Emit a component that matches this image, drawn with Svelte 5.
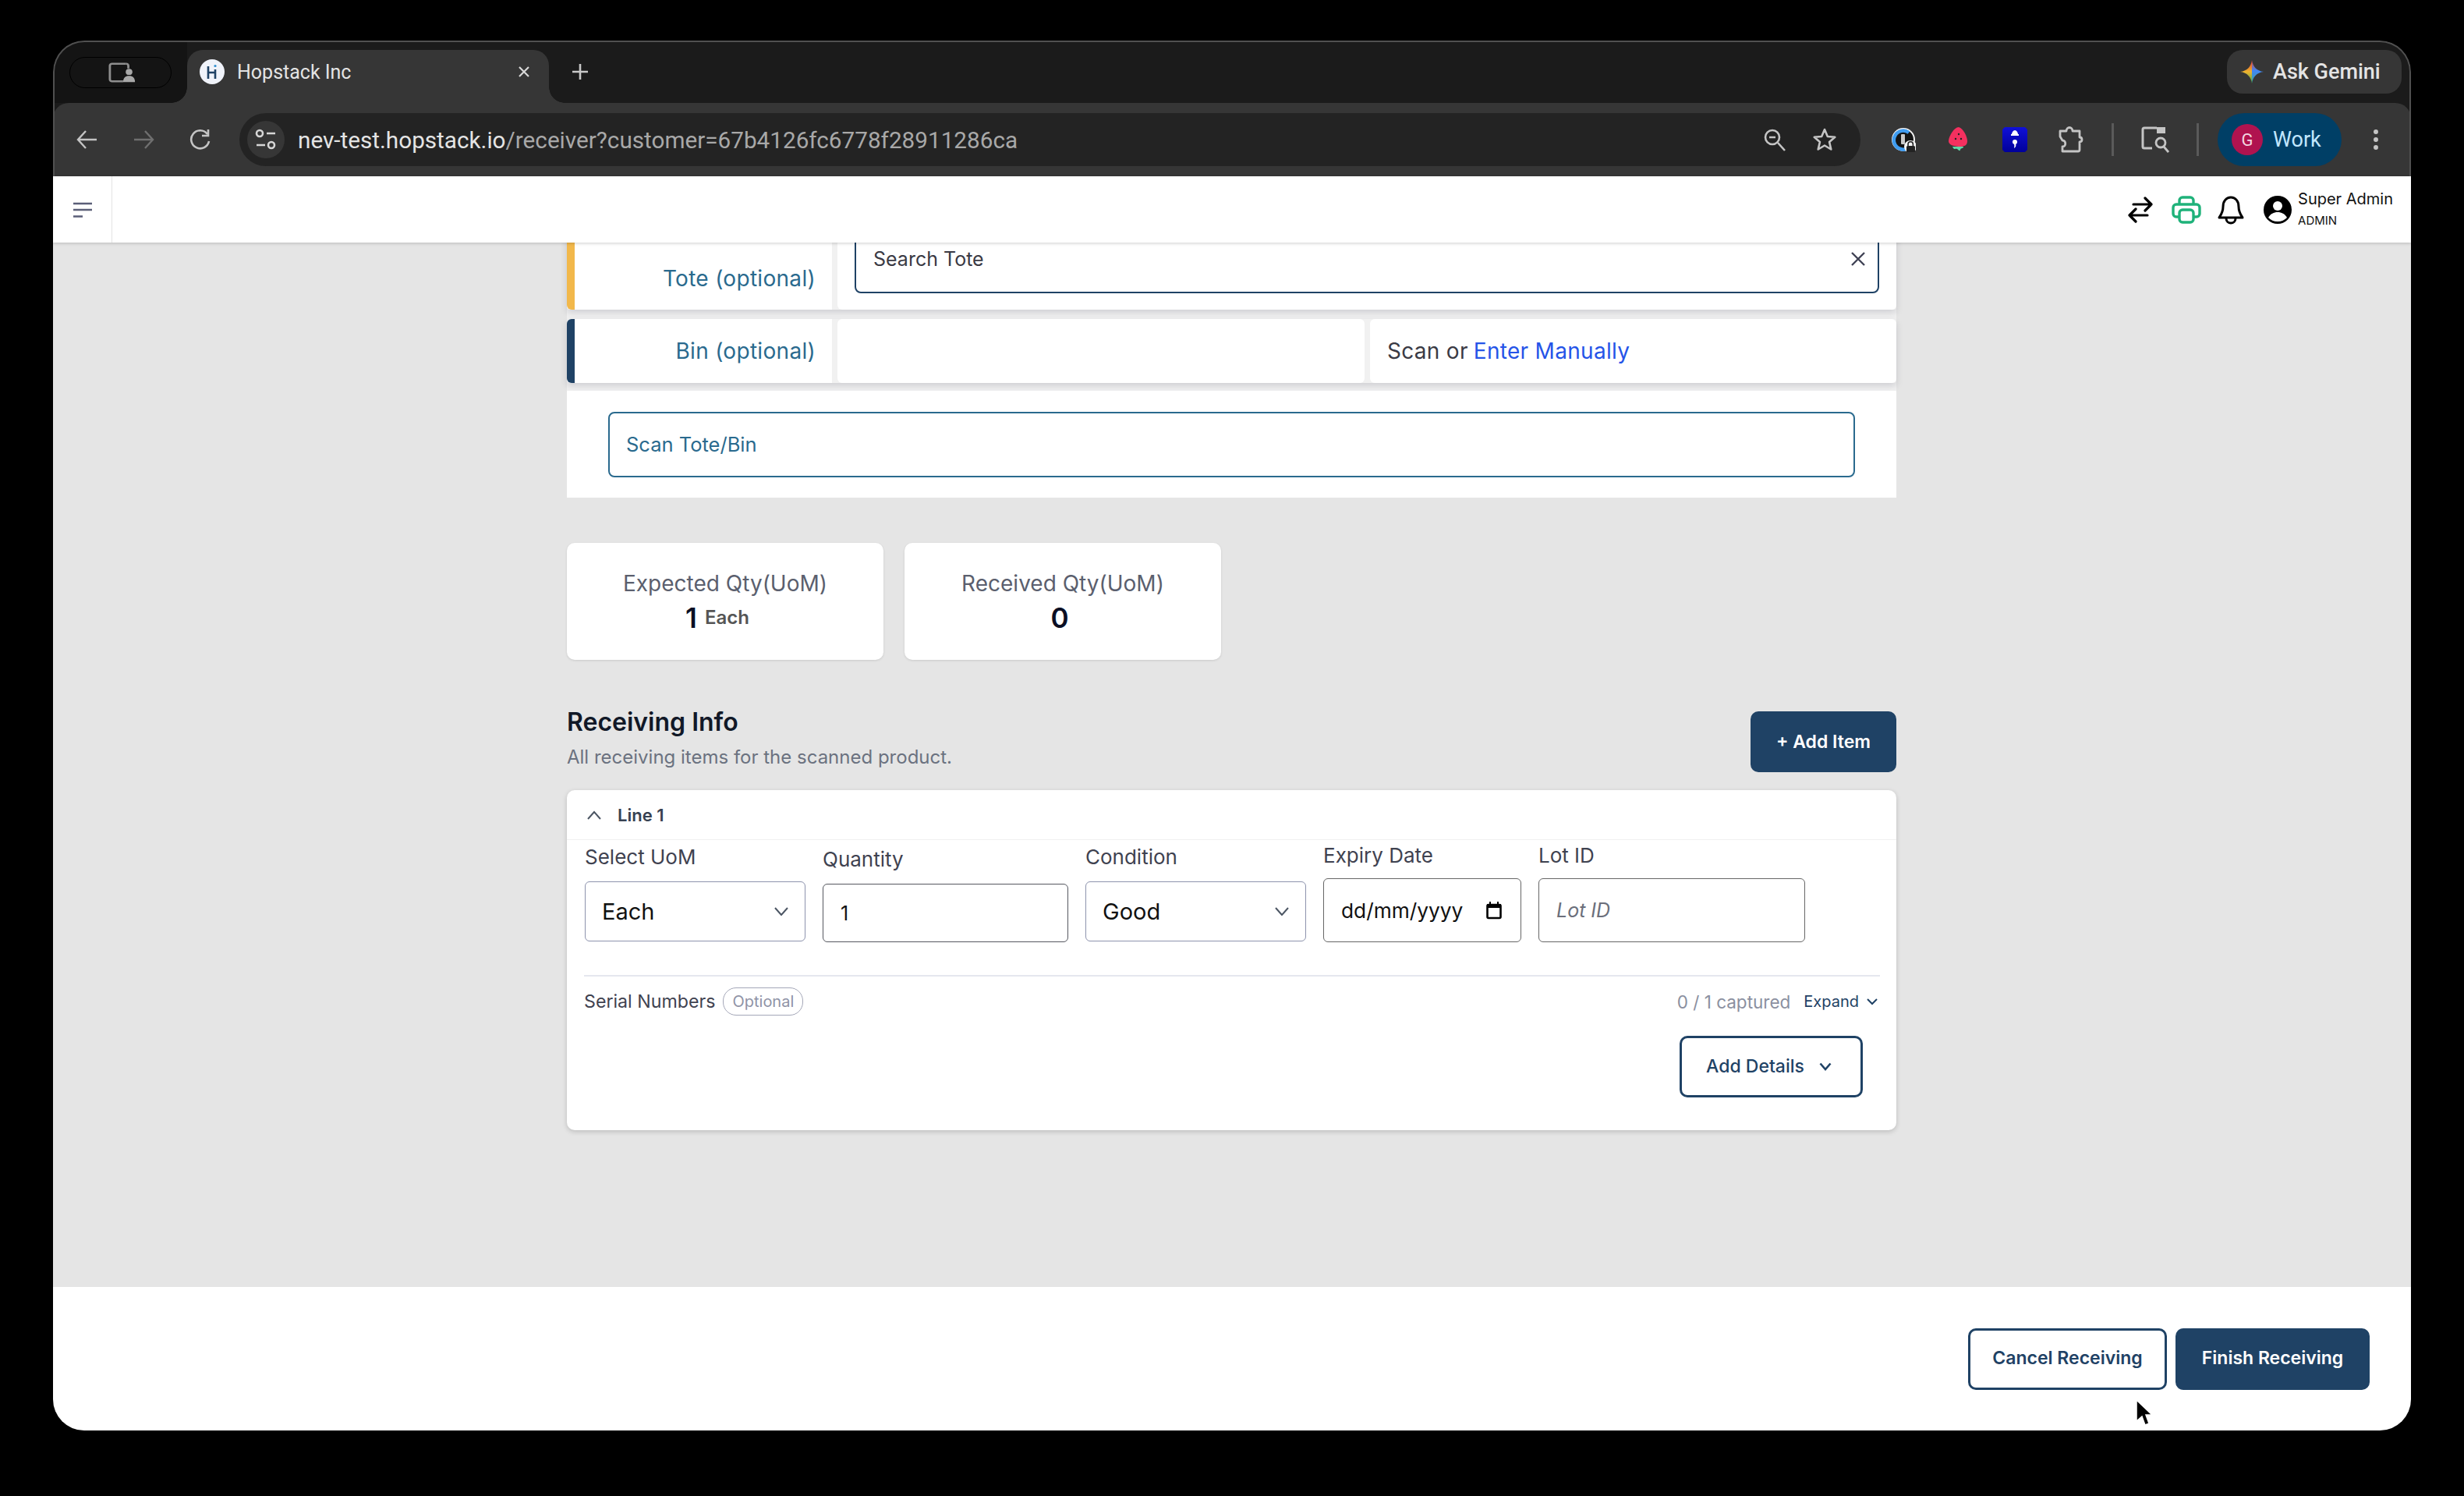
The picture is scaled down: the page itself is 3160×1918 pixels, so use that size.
<script>
	const url_host = "nev-test.hopstack.io";
	const url_rest = "/receiver?customer=67b4126fc6778f28911286ca";

	const qty_cards = [
		{ label: "Expected Qty(UoM)", value: "1", unit: "Each" },
		{ label: "Received Qty(UoM)", value: "0", unit: "" }
	];
</script>

<div class="window">
	<div class="tabstrip">
		<div class="profile-slot">
			<div class="profile-pill">
				<svg width="36" height="26" viewBox="0 0 38 30" preserveAspectRatio="none" fill="none">
					<path d="M24 2H5a3 3 0 0 0-3 3v20a3 3 0 0 0 3 3h15" stroke="#8e8e8e" stroke-width="3"/>
					<path d="M24 2a3 3 0 0 1 3 3v4" stroke="#8e8e8e" stroke-width="3"/>
					<circle cx="28" cy="14" r="4.500" fill="#a8a8a8"/>
					<path d="M20 29c0-6 3-9 8-9s8 3 8 9z" fill="#a8a8a8"/>
				</svg>
			</div>
		</div>
		<div class="tab">
			<div class="favicon">
				<svg width="16" height="22" viewBox="0 0 16 22">
					<path d="M3 4v16M12 8v12M3 12h9" stroke="#1f4265" stroke-width="2.600" fill="none"/>
					<circle cx="12" cy="3.500" r="1.600" fill="#2f8fd0"/>
				</svg>
			</div>
			<span class="tab-title">Hopstack Inc</span>
			<svg class="tab-close" width="18" height="18" viewBox="0 0 18 18">
				<path d="M3 3l12 12M15 3L3 15" stroke="#d8d8d8" stroke-width="2.200"/>
			</svg>
		</div>
		<svg class="new-tab" width="24" height="24" viewBox="0 0 24 24">
			<path d="M12 2v20M2 12h20" stroke="#c8c8c8" stroke-width="2.600"/>
		</svg>
		<div class="spacer"></div>
		<div class="gemini">
			<svg width="30" height="30" viewBox="0 0 30 30">
				<defs>
					<linearGradient id="gem-left" x1="0" y1="0" x2="0" y2="1">
						<stop offset="0" stop-color="#e0392f"/>
						<stop offset="0.5" stop-color="#eeb32e"/>
						<stop offset="1" stop-color="#35a853"/>
					</linearGradient>
					<linearGradient id="gem-right" x1="0" y1="0" x2="0" y2="1">
						<stop offset="0" stop-color="#d9473f"/>
						<stop offset="0.45" stop-color="#4285f4"/>
						<stop offset="1" stop-color="#3aa6a0"/>
					</linearGradient>
				</defs>
				<path d="M15 0C14 8 9 14 0 15c9 1 14 7 15 15z" fill="url(#gem-left)"/>
				<path d="M15 0c1 8 6 14 15 15-9 1-14 7-15 15z" fill="url(#gem-right)"/>
			</svg>
			<span>Ask Gemini</span>
		</div>
	</div>

	<div class="toolbar">
		<div class="nav-btns">
			<svg width="32" height="32" viewBox="0 0 32 32" fill="none" stroke="#c4c4c4" stroke-width="2.400">
				<path d="M28 16H5M14 5L4 16l10 11"/>
			</svg>
			<svg width="32" height="32" viewBox="0 0 32 32" fill="none" stroke="#6f6f6f" stroke-width="2.400">
				<path d="M4 16h23M18 5l10 11-10 11"/>
			</svg>
			<svg width="32" height="32" viewBox="0 0 32 32" fill="none" stroke="#c4c4c4" stroke-width="2.600">
				<path d="M26 9a11.500 11.500 0 1 0 2 9"/>
				<path d="M27 3v8h-8"/>
			</svg>
		</div>
		<div class="omnibox">
			<div class="tune">
				<svg width="28" height="30" viewBox="0 0 28 30" fill="none" stroke="#d6d6d6" stroke-width="2.600">
					<circle cx="6" cy="7" r="4"/>
					<path d="M15 7h11M2 22h11"/>
					<circle cx="21" cy="22" r="4"/>
				</svg>
			</div>
			<div class="url"><span class="url-host">{url_host}</span><span class="url-rest">{url_rest}</span></div>
			<svg class="omni-icon" width="32" height="32" viewBox="0 0 32 32" fill="none" stroke="#c4c4c4" stroke-width="2.600">
				<circle cx="13" cy="13" r="9"/>
				<path d="M9 13h8M20 20l9 10"/>
			</svg>
			<svg class="omni-icon star" width="32" height="32" viewBox="0 0 32 32" fill="none" stroke="#c4c4c4" stroke-width="2.600">
				<path d="M16 3l3.800 9 9.500.8-7.200 6.300 2.200 9.400L16 23.500l-8.300 5 2.200-9.400-7.200-6.300 9.500-.8z" stroke-linejoin="round"/>
			</svg>
		</div>
		<div class="extensions">
			<svg width="32" height="32" viewBox="0 0 32 32">
				<circle cx="16" cy="16" r="15" fill="#f4f4f4"/>
				<circle cx="16" cy="16" r="13" fill="#141414"/>
				<path d="M23 7a12 12 0 1 0 4 14" fill="none" stroke="#3f9cf0" stroke-width="4.500"/>
				<rect x="13" y="9" width="5" height="13" rx="1" fill="#c9c9c9"/>
				<circle cx="25" cy="25" r="8" fill="#f4f4f4"/>
				<rect x="20" y="24" width="11" height="9" rx="1.500" fill="#222"/>
				<path d="M22 24v-2a3.200 3.200 0 0 1 6.400 0v2" fill="none" stroke="#222" stroke-width="1.600"/>
			</svg>
			<svg class="straw" width="26" height="34" viewBox="0 0 26 34">
				<path d="M14 1c6 2 11 12 11 18 0 5-4 7-9 7-7 0-15-2-15-7C1 13 8 1 14 1z" fill="#f4305f"/>
				<path d="M6 26c2 5 4 2 6 3 2 1 3 4 4 1 1-3 4-1 4-4z" fill="#5fd8a8"/>
				<circle cx="14" cy="10" r="1.200" fill="#222"/>
				<circle cx="10" cy="16" r="1.200" fill="#222"/>
				<circle cx="17" cy="16" r="1.200" fill="#222"/>
			</svg>
			<svg width="32" height="32" viewBox="0 0 32 32">
				<defs>
					<linearGradient id="semi" x1="0" y1="0" x2="0" y2="1">
						<stop offset="0" stop-color="#1010d8"/>
						<stop offset="1" stop-color="#00009a"/>
					</linearGradient>
				</defs>
				<path d="M3 0h26l3 3v26l-3 3H3l-3-3V3z" fill="url(#semi)"/>
				<path d="M12 9c0-2 2-5 4-5s4 3 4 5z" fill="#fff"/>
				<rect x="11" y="9" width="10" height="2" fill="#fff"/>
				<circle cx="16" cy="19" r="3" fill="#fff"/>
				<path d="M17 21c1 3 0 5-2 6 .5-2 .5-4 0-6z" fill="#fff"/>
			</svg>
			<svg class="puzzle" width="34" height="34" viewBox="0 0 34 34" fill="none" stroke="#c4c4c4" stroke-width="2.800" stroke-linejoin="round">
				<path d="M3 6h8c0-6 8-6 8 0h9v8c4 0 4 6 0 6v10a2 2 0 0 1-2 2H6v-6c5 0 5-8 0-8l-3-5z"/>
			</svg>
			<div class="ext-sep"></div>
			<svg width="36" height="34" viewBox="0 0 36 34" fill="none">
				<path d="M20 2H4a2 2 0 0 0-2 2v22a2 2 0 0 0 2 2h10" stroke="#c4c4c4" stroke-width="3"/>
				<path d="M20 1h11v8H20z" fill="#c4c4c4"/>
				<circle cx="25" cy="21" r="6" stroke="#c4c4c4" stroke-width="2.800"/>
				<path d="M29 26l6 7" stroke="#c4c4c4" stroke-width="2.800"/>
			</svg>
			<div class="ext-sep"></div>
		</div>
		<div class="work-pill">
			<div class="avatar-g">G</div>
			<span>Work</span>
		</div>
		<svg class="chrome-menu" width="8" height="28" viewBox="0 0 8 28">
			<circle cx="4" cy="4" r="3" fill="#c4c4c4"/>
			<circle cx="4" cy="14" r="3" fill="#c4c4c4"/>
			<circle cx="4" cy="24" r="3" fill="#c4c4c4"/>
		</svg>
	</div>

	<header class="app-header">
		<div class="menu-btn">
			<svg width="24" height="20" viewBox="0 0 24 20">
				<path d="M0 2h24M0 10h24M0 18.500h12" stroke="#5b5f78" stroke-width="2.400"/>
			</svg>
		</div>
		<div class="header-right">
			<svg width="34" height="36" viewBox="0 0 34 36" fill="none" stroke="#000" stroke-width="3.200" stroke-linecap="round" stroke-linejoin="round">
				<path d="M8 11h23M23 3l8 8-8 8M26 25H3M11 17l-8 8 8 8"/>
			</svg>
			<svg width="38" height="36" viewBox="0 0 38 36" fill="none" stroke="#1fb27a" stroke-width="3.400" stroke-linejoin="round">
				<path d="M10 11V6a4 4 0 0 1 4-4h10a4 4 0 0 1 4 4v5"/>
				<path d="M10 27H6a4 4 0 0 1-4-4v-8a4 4 0 0 1 4-4h26a4 4 0 0 1 4 4v8a4 4 0 0 1-4 4h-4"/>
				<rect x="10" y="18" width="18" height="16" rx="4"/>
			</svg>
			<svg class="bell" width="34" height="38" viewBox="0 0 34 38" fill="none" stroke="#000" stroke-width="3" stroke-linejoin="round" stroke-linecap="round">
				<path d="M17 3c-6 0-10 5-10 12 0 7-3 11-5 14h30c-2-3-5-7-5-14 0-7-4-12-10-12z"/>
				<path d="M11 30c0 8 12 8 12 0"/>
			</svg>
			<svg class="user-icon" width="36" height="36" viewBox="0 0 36 36">
				<circle cx="18" cy="18" r="18" fill="#000"/>
				<circle cx="18" cy="13" r="6" fill="#fff"/>
				<path d="M6 28c3-5 7-7 12-7s9 2 12 7c-3 3-7 5-12 5s-9-2-12-5z" fill="#fff"/>
			</svg>
			<div class="user-text">
				<div class="user-name">Super Admin</div>
				<div class="user-role">ADMIN</div>
			</div>
		</div>
	</header>

	<main class="content">
		<div class="scan-block">
			<div class="scan-row tote-row">
				<div class="scan-label tote-label">Tote (optional)</div>
				<div class="scan-cell tote-cell">
					<div class="search-tote">
						<input class="search-input" placeholder="Search Tote" />
						<svg width="20" height="20" viewBox="0 0 20 20">
							<path d="M2 2l16 16M18 2L2 18" stroke="#3f4254" stroke-width="2.400"/>
						</svg>
					</div>
				</div>
			</div>
			<div class="scan-row bin-row">
				<div class="scan-label bin-label">Bin (optional)</div>
				<div class="scan-cell bin-empty"></div>
				<div class="scan-cell bin-action">Scan or <span class="link">Enter Manually</span></div>
			</div>
			<div class="scan-panel">
				<input class="scan-input" placeholder="Scan Tote/Bin" />
			</div>
		</div>

		<div class="qty-cards">
			{#each qty_cards as card}
				<div class="qty-card">
					<div class="qty-label">{card.label}</div>
					<div class="qty-value">{card.value}{#if card.unit}<span class="qty-unit">{card.unit}</span>{/if}</div>
				</div>
			{/each}
		</div>

		<div class="section-head">
			<div>
				<h2>Receiving Info</h2>
				<p>All receiving items for the scanned product.</p>
			</div>
			<button class="btn-solid add-item">+ Add Item</button>
		</div>

		<section class="line-card">
			<div class="line-head">
				<svg width="20" height="12" viewBox="0 0 20 12" fill="none" stroke="#4b5563" stroke-width="2">
					<path d="M2 11l8-9 8 9"/>
				</svg>
				<span>Line 1</span>
			</div>
			<div class="line-body">
				<div class="fields">
					<div class="field f-uom">
						<div class="field-label">Select UoM</div>
						<div class="select">
							<span>Each</span>
							<svg width="18" height="11" viewBox="0 0 18 11" fill="none" stroke="#4b5563" stroke-width="2"><path d="M1 1l8 9 8-9"/></svg>
						</div>
					</div>
					<div class="field f-qty">
						<div class="field-label">Quantity</div>
						<input class="box" value="1" />
					</div>
					<div class="field f-cond">
						<div class="field-label">Condition</div>
						<div class="select">
							<span>Good</span>
							<svg width="18" height="11" viewBox="0 0 18 11" fill="none" stroke="#4b5563" stroke-width="2"><path d="M1 1l8 9 8-9"/></svg>
						</div>
					</div>
					<div class="field f-date">
						<div class="field-label">Expiry Date</div>
						<div class="box date-box">
							<span>dd/mm/yyyy</span>
							<svg width="20" height="24" viewBox="0 0 20 24" fill="none">
								<rect x="1.500" y="5" width="17" height="17" rx="1.500" stroke="#000" stroke-width="2.600"/>
								<rect x="1" y="4" width="18" height="5" fill="#000"/>
								<path d="M5 1v4M15 1v4" stroke="#000" stroke-width="2"/>
							</svg>
						</div>
					</div>
					<div class="field f-lot">
						<div class="field-label">Lot ID</div>
						<input class="box lot-input" placeholder="Lot ID" />
					</div>
				</div>
				<div class="serial-row">
					<span class="serial-label">Serial Numbers</span>
					<span class="optional">Optional</span>
					<span class="spacer"></span>
					<span class="captured">0 / 1 captured</span>
					<span class="expand">Expand</span>
					<svg width="14" height="9" viewBox="0 0 14 9" fill="none" stroke="#1f4265" stroke-width="2"><path d="M1 1l6 6 6-6"/></svg>
				</div>
				<div class="details-row">
					<button class="btn-outline add-details">
						Add Details
						<svg width="16" height="11" viewBox="0 0 16 11" fill="none" stroke="#1f4265" stroke-width="2.600"><path d="M1.500 1.500L8 9l6.500-7.500"/></svg>
					</button>
				</div>
			</div>
		</section>
	</main>

	<footer class="footer">
		<button class="btn-outline footer-btn cancel">Cancel Receiving</button>
		<button class="btn-solid footer-btn finish">Finish Receiving</button>
	</footer>

	<svg class="cursor" width="24" height="36" viewBox="0 0 24 36">
		<path d="M2 1v27l7-6 4 11 5-2-4-11h8z" fill="#000" stroke="#fff" stroke-width="1.500"/>
	</svg>
</div>

<style>
	:global(body) {
		background: #000;
		font-family: Inter, "Noto Sans", sans-serif;
	}

	.window {
		position: relative;
		display: flex;
		flex-direction: column;
		box-sizing: border-box;
		width: 3024px;
		height: 1782px;
		margin: 52px 0 0 68px;
		border-radius: 40px;
		overflow: hidden;
		background: #1b1b1b;
	}

	/* thin lighter edge round the browser frame */
	.window::after {
		content: "";
		position: absolute;
		left: 0;
		right: 0;
		top: 0;
		height: 174px;
		box-sizing: border-box;
		border: 2px solid #505050;
		border-bottom: 0;
		border-radius: 40px 40px 0 0;
		pointer-events: none;
	}

	/* browser chrome */

	.tabstrip {
		display: flex;
		align-items: flex-start;
		height: 80px;
		font-family: Roboto, sans-serif;
	}

	.profile-slot {
		display: flex;
		justify-content: center;
		padding: 21px 0 0 20px;
		width: 172px;
		height: 80px;
		box-sizing: border-box;
		background: #141414;
	}

	.profile-pill {
		display: flex;
		align-items: center;
		justify-content: center;
		width: 131px;
		height: 40px;
		margin-right: 20px;
		padding-left: 6px;
		box-sizing: border-box;
		border: 1px solid #000;
		border-radius: 20px;
	}

	.tab {
		position: relative;
		display: flex;
		align-items: center;
		width: 464px;
		height: 68px;
		margin-top: 12px;
		padding: 0 0 12px 16px;
		box-sizing: border-box;
		background: #363636;
		border-radius: 20px 20px 0 0;
	}

	.tab::before,
	.tab::after {
		content: "";
		position: absolute;
		bottom: 0;
		width: 20px;
		height: 20px;
	}

	.tab::before {
		left: -20px;
		background: radial-gradient(circle at 0 0, transparent 19.500px, #363636 20px);
	}

	.tab::after {
		right: -20px;
		background: radial-gradient(circle at 100% 0, transparent 19.500px, #363636 20px);
	}

	.favicon {
		display: flex;
		align-items: center;
		justify-content: center;
		width: 32px;
		height: 32px;
		border-radius: 50%;
		background: #f0f3fa;
	}

	.tab-title {
		margin-left: 16px;
		font-size: 25px;
		color: #e4e4e4;
	}

	.tab-close {
		position: absolute;
		left: 423px;
		top: 19px;
	}

	.new-tab {
		margin: 28px 0 0 28px;
	}

	.spacer {
		flex: 1;
	}

	.gemini {
		display: flex;
		align-items: center;
		gap: 12px;
		width: 224px;
		height: 56px;
		margin: 12px 12px 0 0;
		padding-left: 17px;
		box-sizing: border-box;
		background: #363636;
		border-radius: 20px;
		font-size: 27px;
		font-weight: 500;
		color: #e4e4e4;
	}

	.toolbar {
		display: flex;
		align-items: center;
		height: 94px;
		padding: 0 0 0 28px;
		background: #363636;
		border-radius: 20px 20px 0 0;
		font-family: Roboto, sans-serif;
	}

	.nav-btns {
		display: flex;
		gap: 40px;
	}

	.omnibox {
		display: flex;
		align-items: center;
		width: 2079px;
		height: 68px;
		margin-left: 35px;
		box-sizing: border-box;
		padding: 0 30px 0 10px;
		background: #232323;
		border-radius: 34px;
	}

	.tune {
		display: flex;
		align-items: center;
		justify-content: center;
		width: 48px;
		height: 48px;
		border-radius: 50%;
		background: #363636;
	}

	.url {
		flex: 1;
		margin-left: 17px;
		font-size: 29.700px;
	}

	.url-host {
		color: #e4e4e4;
	}

	.url-rest {
		color: #a8a8a8;
	}

	.star {
		margin-left: 32px;
	}

	.extensions {
		display: flex;
		align-items: center;
		margin-left: 39px;
		gap: 41px;
	}

	.straw {
		margin-right: 3px;
	}

	.puzzle {
		margin-left: -2px;
	}

	.ext-sep {
		width: 3px;
		height: 42px;
		background: #5a5a5a;
		margin: 0 -6px;
	}

	.work-pill {
		display: flex;
		align-items: center;
		gap: 13px;
		width: 159px;
		height: 68px;
		margin-left: 30px;
		padding-left: 18px;
		box-sizing: border-box;
		background: #003f66;
		border-radius: 34px;
		font-size: 27px;
		color: #c2e7ff;
	}

	.avatar-g {
		display: flex;
		align-items: center;
		justify-content: center;
		width: 40px;
		height: 40px;
		border-radius: 50%;
		background: #b0134f;
		font-size: 22px;
		color: #f3d6e0;
	}

	.chrome-menu {
		margin-left: 40px;
	}

	/* app */

	.app-header {
		display: flex;
		align-items: center;
		justify-content: space-between;
		height: 85px;
		background: #fff;
		box-shadow: 0 1px 4px rgba(0, 0, 0, 0.2);
		position: relative;
		z-index: 1;
		font-family: Inter, sans-serif;
	}

	.menu-btn {
		display: flex;
		align-items: center;
		justify-content: center;
		width: 75px;
		height: 85px;
		border-right: 1px solid #e4e4e4;
	}

	.header-right {
		display: flex;
		align-items: center;
		padding-right: 23px;
	}

	.header-right svg {
		margin-right: 23px;
	}

	.header-right .bell {
		margin-left: -2px;
		margin-right: 25px;
	}

	.header-right .user-icon {
		margin-right: 8px;
	}

	.user-name {
		font-size: 20px;
		line-height: 28px;
		color: #111;
	}

	.user-role {
		font-size: 15px;
		line-height: 28px;
		color: #111;
	}

	.content {
		flex: 1;
		overflow: hidden;
		background: #e5e5e5;
		padding: 0 0 0 659px;
	}

	.scan-block {
		width: 1705px;
		margin-top: -24px;
		background: #f1f1f1;
	}

	.scan-row {
		display: flex;
		gap: 7px;
		background: #f1f1f1;
		box-shadow: 0 4px 8px rgba(40, 40, 60, 0.16);
		border-radius: 4px;
	}

	.tote-row {
		height: 110px;
		margin-bottom: 12px;
	}

	.bin-row {
		height: 82px;
		margin-bottom: 10px;
	}

	.scan-label {
		display: flex;
		align-items: center;
		justify-content: flex-end;
		box-sizing: border-box;
		width: 340px;
		padding-right: 21px;
		background: #fff;
		border-left: 10px solid #f2b84b;
		border-radius: 6px 0 0 6px;
		font-size: 28px;
		letter-spacing: 0.3px;
		color: #2a6a8e;
	}

	.tote-label {
		align-items: flex-end;
		padding-bottom: 23px;
	}

	.bin-label {
		border-left-color: #1f4265;
	}

	.scan-cell {
		background: #fff;
		border-radius: 6px;
	}

	.tote-cell {
		flex: 1;
		padding-right: 22px;
		box-sizing: border-box;
	}

	.search-tote {
		display: flex;
		align-items: center;
		box-sizing: border-box;
		height: 89px;
		margin: 0 0 0 22px;
		padding: 0 15px 0 22px;
		border: 2px solid #1f4265;
		border-radius: 8px;
	}

	.search-input,
	.scan-input {
		flex: 1;
		border: none;
		outline: none;
		padding: 0;
		background: transparent;
		font-family: inherit;
		font-size: 25px;
	}

	.search-input::placeholder {
		color: #3a3a44;
		opacity: 1;
	}

	.bin-empty {
		width: 676px;
	}

	.bin-action {
		flex: 1;
		display: flex;
		align-items: center;
		gap: 7px;
		padding-left: 22px;
		font-size: 28px;
		letter-spacing: 0.3px;
		color: #3a3a44;
	}

	.link {
		color: #2554e8;
	}

	.scan-panel {
		height: 137px;
		padding: 27px 53px 0;
		box-sizing: border-box;
		background: #fff;
	}

	.scan-input {
		display: block;
		box-sizing: border-box;
		width: 100%;
		height: 84px;
		padding: 0 21px 2px;
		border: 2px solid #2a6a8e;
		border-radius: 8px;
		font-size: 25.500px;
		color: #2a6a8e;
	}

	.scan-input::placeholder {
		color: #2a6a8e;
		opacity: 1;
	}

	.qty-cards {
		display: flex;
		gap: 27px;
		margin-top: 58px;
	}

	.qty-card {
		display: flex;
		flex-direction: column;
		align-items: center;
		box-sizing: border-box;
		width: 406px;
		height: 150px;
		padding-top: 33px;
		background: #fff;
		border-radius: 10px;
		box-shadow: 0 1px 3px rgba(0, 0, 0, 0.12);
	}

	.qty-label {
		font-size: 28px;
		line-height: 38px;
		color: #5b5f6e;
	}

	.qty-value {
		display: flex;
		align-items: center;
		gap: 10px;
		margin-top: 3px;
		padding-right: 8px;
		font-size: 35px;
		line-height: 44px;
		font-weight: 600;
		color: #0b0f24;
	}

	.qty-unit {
		margin-right: 12px;
		font-size: 24px;
		font-weight: 600;
		color: #555;
	}

	.section-head {
		display: flex;
		justify-content: space-between;
		width: 1705px;
		margin-top: 66px;
	}

	h2 {
		margin: 0;
		font-size: 32px;
		line-height: 28px;
		font-weight: 600;
		color: #111827;
	}

	.section-head p {
		margin: 16px 0 0;
		font-size: 24px;
		line-height: 30px;
		color: #6b7280;
	}

	button {
		font-family: inherit;
		cursor: pointer;
	}

	.btn-solid {
		border: none;
		background: #1f4265;
		color: #fff;
		font-weight: 600;
		border-radius: 10px;
	}

	.btn-outline {
		border: 3px solid #1f4265;
		background: #fff;
		color: #1f4265;
		font-weight: 600;
		border-radius: 10px;
	}

	.add-item {
		width: 187px;
		height: 78px;
		font-size: 23px;
	}

	.line-card {
		width: 1705px;
		height: 436px;
		margin-top: 23px;
		background: #fff;
		border-radius: 10px;
		box-shadow: 0 2px 6px rgba(0, 0, 0, 0.18);
	}

	.line-head {
		display: flex;
		align-items: center;
		gap: 20px;
		box-sizing: border-box;
		height: 64px;
		padding-left: 25px;
		border-bottom: 1px solid #f0f0f0;
		font-size: 22px;
		font-weight: 600;
		color: #374151;
	}

	.line-body {
		padding: 0 21px 0 22px;
	}

	.fields {
		display: flex;
		align-items: flex-end;
		gap: 22px;
		height: 131px;
		padding-left: 1px;
	}

	.field-label {
		font-size: 26px;
		line-height: 30px;
		margin-bottom: 16px;
		color: #3f4250;
	}

	.f-uom, .f-cond {
		width: 283px;
		padding-bottom: 1px;
	}

	.f-qty {
		width: 315px;
	}

	.f-date {
		width: 254px;
	}

	.f-lot {
		width: 342px;
	}

	.f-date .field-label, .f-lot .field-label {
		margin-bottom: 14px;
	}

	.select {
		display: flex;
		align-items: center;
		justify-content: space-between;
		box-sizing: border-box;
		height: 77px;
		padding: 0 21px;
		border: 1px solid #8d93ad;
		border-radius: 6px;
		font-size: 29px;
		color: #111;
		background: #fff;
	}

	.box {
		display: block;
		box-sizing: border-box;
		width: 100%;
		height: 75px;
		padding: 0 22px;
		border: 1.500px solid #55575f;
		border-radius: 6px;
		outline: none;
		font-family: inherit;
		font-size: 25px;
		color: #111;
		background: #fff;
	}

	.date-box {
		display: flex;
		align-items: center;
		justify-content: space-between;
		height: 82px;
		padding-right: 24px;
		font-size: 26.300px;
		border-width: 1px;
		border-color: #666;
	}

	.lot-input {
		height: 82px;
		border-width: 1px;
		border-color: #666;
		font-style: italic;
	}

	.lot-input::placeholder {
		color: #6b6f7b;
		opacity: 1;
	}

	.serial-row {
		display: flex;
		align-items: center;
		height: 66px;
		margin-top: 42px;
		padding-right: 3px;
		border-top: 2px solid #e5e7ef;
		box-sizing: border-box;
		font-size: 23.200px;
		color: #3f4250;
	}

	.optional {
		display: flex;
		align-items: center;
		height: 34px;
		margin-left: 10px;
		padding: 0 11px;
		border: 1.500px solid #a4a7b8;
		border-radius: 17px;
		font-size: 20px;
		color: #8f93a6;
	}

	.captured {
		color: #8b90a0;
		font-size: 22.500px;
	}

	.expand {
		margin: 0 10px 0 17px;
		font-size: 20px;
		color: #1f4265;
	}

	.details-row {
		display: flex;
		justify-content: flex-end;
		padding-right: 22px;
		margin-top: 12px;
	}

	.add-details {
		display: flex;
		align-items: center;
		justify-content: center;
		gap: 19px;
		width: 235px;
		height: 79px;
		padding: 0 6px 1px 0;
		font-size: 23px;
		font-weight: 500;
	}

	.footer {
		display: flex;
		justify-content: flex-end;
		gap: 11px;
		height: 184px;
		padding: 53px 53px 0 0;
		box-sizing: border-box;
		background: #fff;
	}

	.footer-btn {
		height: 79px;
		padding: 0 0 4px;
		font-size: 23px;
	}

	.cancel {
		width: 255px;
	}

	.finish {
		width: 249px;
	}

	.cursor {
		position: absolute;
		left: 2670px;
		top: 1742px;
	}
</style>
